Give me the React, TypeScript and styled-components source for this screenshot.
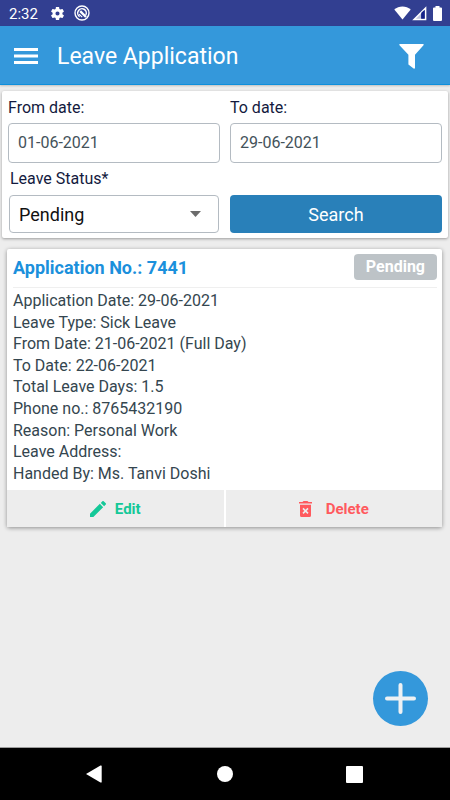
import React from "react";
import styled, { createGlobalStyle } from "styled-components";

const GlobalStyle = createGlobalStyle`
  *, *::before, *::after { box-sizing: border-box; }
  body { margin: 0; background: #ededed; }
  body, button, input, select { font-family: Roboto, "Liberation Sans", sans-serif; }
  button { border: 0; padding: 0; background: none; cursor: pointer; }
`;

const Screen = styled.div`
  display: flex;
  flex-direction: column;
  min-height: 100vh;
  background: #ededed;
`;

const StatusBar = styled.div`
  display: flex;
  align-items: center;
  height: 26px;
  padding: 0 8px 0 9px;
  background: #323f91;
  color: #fff;
`;

const Clock = styled.time`
  margin-right: 12px;
  padding-top: 2px;
  font-size: 15px;
  line-height: 24px;
`;

const StatusGroup = styled.div<{ $end?: boolean }>`
  display: flex;
  align-items: center;
  gap: ${(p) => (p.$end ? 1 : 9)}px;
  margin-left: ${(p) => (p.$end ? "auto" : "0")};
`;

const AppBar = styled.header`
  display: flex;
  align-items: center;
  height: 59px;
  padding: 2px 26px 0 14px;
  background: #3498db;
  border-bottom: 1px solid #0d8fdc;
  box-shadow: 0 1px 2px rgba(0, 0, 0, 0.2);
  color: #fff;
`;

const IconButton = styled.button`
  display: flex;
  color: inherit;
`;

const Title = styled.h1`
  flex: 1;
  margin: 0 0 0 19px;
  padding-top: 2px;
  font-size: 23px;
  font-weight: 400;
  line-height: 32px;
`;

const Content = styled.main`
  position: relative;
  flex: 1;
  display: flex;
  flex-direction: column;
  gap: 11px;
  padding: 6px 2px;
`;

const SearchForm = styled.form`
  display: grid;
  grid-template-columns: 1fr 1fr;
  column-gap: 10px;
  row-gap: 5px;
  padding: 6px 6px 5px;
  background: #fff;
  border-radius: 2px;
  box-shadow: 0 1px 3px rgba(0, 0, 0, 0.35);
`;

const Field = styled.div<{ $inset?: boolean }>`
  display: flex;
  flex-direction: column;
  justify-content: flex-end;
  gap: ${(p) => (p.$inset ? 5 : 4)}px;
  padding: ${(p) => (p.$inset ? "0 1px" : "0")};
`;

const Label = styled.label<{ $inset?: boolean }>`
  padding-left: ${(p) => (p.$inset ? 1 : 0)}px;
  font-size: 16px;
  line-height: 22px;
  color: #131a3e;
`;

const DateInput = styled.input`
  width: 100%;
  height: 40px;
  padding: 0 9px 2px;
  border: 1px solid #b4bbc2;
  border-radius: 4px;
  background: #fff;
  font-size: 16px;
  color: #44525a;
  outline: none;
`;

const SelectBox = styled.div`
  display: grid;
  align-items: center;
  color: #6c6c6c;

  > * { grid-area: 1 / 1; }
  > svg { justify-self: end; margin-right: 18px; pointer-events: none; }
`;

const Select = styled.select`
  appearance: none;
  width: 100%;
  height: 38px;
  padding: 1px 9px 0;
  border: 1px solid #b4bbc2;
  border-radius: 4px;
  background: #fff;
  font-size: 18px;
  color: #111;
  outline: none;
`;

const SearchButton = styled.button`
  align-self: end;
  height: 38px;
  padding-top: 1px;
  border-radius: 4px;
  background: #2980b9;
  font-size: 18px;
  color: #fff;
`;

const Card = styled.article`
  margin: 0 6px 0 5px;
  background: #fff;
  border-radius: 2px;
  box-shadow: 0 1px 4px rgba(0, 0, 0, 0.4);
`;

const CardHeader = styled.div`
  display: flex;
  align-items: center;
  justify-content: space-between;
  height: 39px;
  margin: 0 5px 0 6px;
  padding-bottom: 2px;
  border-bottom: 1px solid #efefef;
`;

const CardTitle = styled.h2`
  margin: 0;
  padding-top: 1px;
  font-size: 18px;
  font-weight: 700;
  line-height: 24px;
  color: #1b90dc;
`;

const Badge = styled.span`
  padding: 0 12px;
  border-radius: 4px;
  background: #bdc3c7;
  font-size: 16px;
  font-weight: 700;
  line-height: 26px;
  color: #fff;
`;

const Details = styled.ul`
  margin: 0;
  padding: 2px 5px 6px 6px;
  list-style: none;
  font-size: 16px;
  line-height: 1.35;
  color: #34464f;
`;

const Actions = styled.div`
  display: grid;
  grid-template-columns: 1fr 1fr;
  gap: 2px;
`;

const ActionButton = styled.button<{ $tone: string; $gap: number }>`
  display: flex;
  align-items: center;
  justify-content: center;
  gap: ${(p) => p.$gap}px;
  height: 37px;
  background: #ededed;
  font-size: 15px;
  font-weight: 700;
  color: ${(p) => p.$tone};
`;

const AddButton = styled.button`
  position: absolute;
  right: 22px;
  bottom: 21px;
  display: flex;
  align-items: center;
  justify-content: center;
  width: 55px;
  height: 55px;
  border-radius: 50%;
  background: #3498db;
`;

const NavBar = styled.nav`
  display: flex;
  align-items: center;
  justify-content: space-between;
  height: 53px;
  padding: 0 84px 0 82px;
  border-top: 1px solid #9d9d9d;
  background: #000;
  color: #fff;
`;

const details = [
  "Application Date: 29-06-2021",
  "Leave Type: Sick Leave",
  "From Date: 21-06-2021 (Full Day)",
  "To Date: 22-06-2021",
  "Total Leave Days: 1.5",
  "Phone no.: 8765432190",
  "Reason: Personal Work",
  "Leave Address:",
  "Handed By: Ms. Tanvi Doshi",
];

const GearIcon = () => (
  <svg width="15" height="15" viewBox="1 1 22 22" fill="currentColor" aria-hidden="true">
    <path d="M19.14 12.94c.04-.3.06-.61.06-.94s-.02-.64-.07-.94l2.03-1.58a.49.49 0 0 0 .12-.61l-1.92-3.32a.49.49 0 0 0-.59-.22l-2.39.96a7 7 0 0 0-1.62-.94l-.36-2.54a.48.48 0 0 0-.48-.41h-3.84a.47.47 0 0 0-.47.41l-.36 2.54c-.59.24-1.13.57-1.62.94l-2.39-.96a.48.48 0 0 0-.59.22L2.74 8.87a.48.48 0 0 0 .12.61l2.03 1.58a6 6 0 0 0 0 1.88l-2.03 1.58a.49.49 0 0 0-.12.61l1.92 3.32c.12.22.37.29.59.22l2.39-.96c.5.38 1.03.7 1.62.94l.36 2.54c.05.24.24.41.48.41h3.84c.24 0 .44-.17.47-.41l.36-2.54a7 7 0 0 0 1.62-.94l2.39.96c.22.08.47 0 .59-.22l1.92-3.32a.47.47 0 0 0-.12-.61zM12 15a3 3 0 1 1 0-6 3 3 0 0 1 0 6z" />
  </svg>
);

const DialIcon = () => (
  <svg width="16" height="16" viewBox="0 0 16 16" fill="none" stroke="currentColor" aria-hidden="true">
    <circle cx="8" cy="8" r="7" strokeWidth="1.4" />
    <path d="M5.6 11.6A4.3 4.3 0 1 1 11.8 10" strokeWidth="1.5" />
    <path d="M6.2 6.2 12 12" strokeWidth="2.4" />
    <path d="M5 9.2 8.2 12.2" strokeWidth="1.1" />
  </svg>
);

const WifiIcon = () => (
  <svg width="17" height="14" viewBox="0 0 17 14" fill="currentColor" aria-hidden="true">
    <path d="M8.5 13.5.3 3.6C2.6 1.5 5.4.4 8.5.4s5.9 1.1 8.2 3.2z" />
  </svg>
);

const SignalIcon = () => (
  <svg width="15" height="15" viewBox="0 0 15 15" aria-hidden="true">
    <path d="M2 13.6 13.6 2v11.6z" fill="none" stroke="currentColor" strokeWidth="1.5" />
    <path d="M9 6.500v7H3z" fill="currentColor" opacity=".7" />
    <path d="M9.500 6.500 12.500 4v8.500h-3z" fill="#14208a" />
  </svg>
);

const BatteryIcon = () => (
  <svg width="9" height="15" viewBox="0 0 9 15" fill="currentColor" aria-hidden="true">
    <path d="M2.5 0h4v1.500H8a1 1 0 0 1 1 1V14a1 1 0 0 1-1 1H1a1 1 0 0 1-1-1V2.500a1 1 0 0 1 1-1h1.500z" />
  </svg>
);

const MenuIcon = () => (
  <svg width="24" height="18" viewBox="0 0 24 18" fill="currentColor" aria-hidden="true">
    <path d="M0 1h24v3H0zM0 7.500h24v3H0zM0 14h24v3H0z" />
  </svg>
);

const FilterIcon = () => (
  <svg width="25" height="25" viewBox="0 0 25 25" fill="currentColor" aria-hidden="true">
    <path d="M1 0h23q1.200.1.500 1.200L16 10.800V24q-.3 1-1.400.6L9.400 20.400v-9.600L.5 1.200Q-.2.1 1 0z" />
  </svg>
);

const PencilIcon = () => (
  <svg width="16" height="16" viewBox="3 3 18 18" fill="currentColor" aria-hidden="true">
    <path d="M3 17.250V21h3.750L17.810 9.940l-3.750-3.750zM20.710 7.040a1 1 0 0 0 0-1.410l-2.340-2.340a1 1 0 0 0-1.410 0l-1.830 1.830 3.750 3.750z" />
  </svg>
);

const TrashIcon = () => (
  <svg width="13" height="16" viewBox="0 0 13 16" aria-hidden="true">
    <path d="M0 1h3.500l1-1h4l1 1H13v1.600H0zM1 3.800h11V14.500Q12 16 10.500 16h-8Q1 16 1 14.500z" fill="currentColor" />
    <path d="m4 7.400 5 5m0-5-5 5" stroke="#ededed" strokeWidth="1.6" />
  </svg>
);

export default function App() {
  return (
    <>
      <GlobalStyle />
      <Screen>
        <StatusBar>
          <Clock>2:32</Clock>
          <StatusGroup>
            <GearIcon />
            <DialIcon />
          </StatusGroup>
          <StatusGroup $end>
            <WifiIcon />
            <SignalIcon />
            <svg width="4" height="1" aria-hidden="true" />
            <BatteryIcon />
          </StatusGroup>
        </StatusBar>

        <AppBar>
          <IconButton type="button" aria-label="Menu"><MenuIcon /></IconButton>
          <Title>Leave Application</Title>
          <IconButton type="button" aria-label="Filter"><FilterIcon /></IconButton>
        </AppBar>

        <Content>
          <SearchForm onSubmit={(e) => e.preventDefault()}>
            <Field>
              <Label htmlFor="from-date">From date:</Label>
              <DateInput id="from-date" type="text" defaultValue="01-06-2021" />
            </Field>
            <Field>
              <Label htmlFor="to-date">To date:</Label>
              <DateInput id="to-date" type="text" defaultValue="29-06-2021" />
            </Field>
            <Field $inset>
              <Label $inset htmlFor="leave-status">Leave Status*</Label>
              <SelectBox>
                <Select id="leave-status" defaultValue="Pending">
                  <option>Pending</option>
                </Select>
                <svg width="11" height="6" viewBox="0 0 11 6" fill="currentColor" aria-hidden="true">
                  <path d="M0 0h11L5.500 6z" />
                </svg>
              </SelectBox>
            </Field>
            <SearchButton type="submit">Search</SearchButton>
          </SearchForm>

          <Card>
            <CardHeader>
              <CardTitle>Application No.: 7441</CardTitle>
              <Badge>Pending</Badge>
            </CardHeader>
            <Details>
              {details.map((line) => <li key={line}>{line}</li>)}
            </Details>
            <Actions>
              <ActionButton type="button" $tone="#14c898" $gap={9}><PencilIcon />Edit</ActionButton>
              <ActionButton type="button" $tone="#ff5a5e" $gap={14}><TrashIcon />Delete</ActionButton>
            </Actions>
          </Card>

          <AddButton type="button" aria-label="Add application">
            <svg width="31" height="31" viewBox="0 0 31 31" stroke="#eef1f3" strokeWidth="4" strokeLinecap="round" aria-hidden="true">
              <path d="M15.500 2v27M2 15.500h27" />
            </svg>
          </AddButton>
        </Content>

        <NavBar>
          <IconButton type="button" aria-label="Back">
            <svg width="22" height="18" viewBox="0 0 22 18" fill="currentColor" aria-hidden="true">
              <path d="M4 9 18.500.5q1.200-.4 1.200.6v15.800q0 1-1.200.6z" />
            </svg>
          </IconButton>
          <IconButton type="button" aria-label="Home">
            <svg width="16" height="16" viewBox="0 0 16 16" fill="currentColor" aria-hidden="true">
              <circle cx="8" cy="8" r="8" />
            </svg>
          </IconButton>
          <IconButton type="button" aria-label="Recent apps">
            <svg width="20" height="17" viewBox="0 0 20 17" fill="currentColor" aria-hidden="true">
              <rect width="17" height="17" rx="1" />
            </svg>
          </IconButton>
        </NavBar>
      </Screen>
    </>
  );
}
